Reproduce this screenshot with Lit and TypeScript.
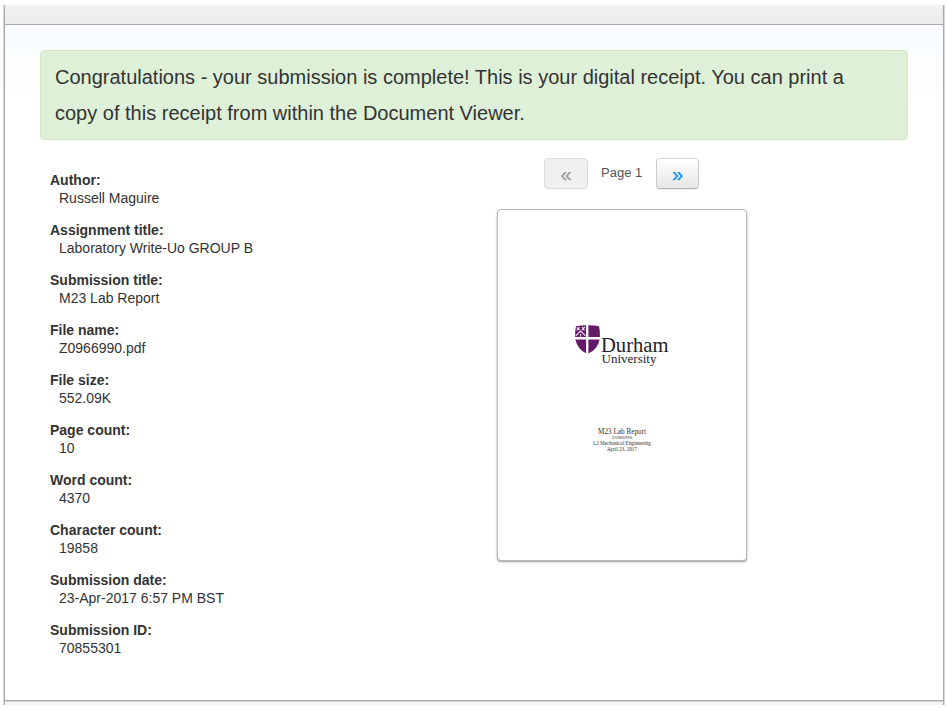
import { LitElement, html, css } from "lit";
import { customElement } from "lit/decorators.js";

const DETAILS: [string, string][] = [
  ["Author:", "Russell Maguire"],
  ["Assignment title:", "Laboratory Write-Uo GROUP B"],
  ["Submission title:", "M23 Lab Report"],
  ["File name:", "Z0966990.pdf"],
  ["File size:", "552.09K"],
  ["Page count:", "10"],
  ["Word count:", "4370"],
  ["Character count:", "19858"],
  ["Submission date:", "23-Apr-2017 6:57 PM BST"],
  ["Submission ID:", "70855301"],
];

@customElement("durham-logo")
class DurhamLogo extends LitElement {
  static styles = css`
    :host { display: block; width: 96px; height: 46px; }
    svg { display: block; }
    text { font-family: "Liberation Serif", serif; fill: #262226; }
    .shield { fill: #641c68; }
    .charge { fill: none; stroke: #eee4ef; stroke-width: 1.1; }
  `;
  render() {
    return html`<svg width="96" height="46" viewBox="0 0 96 46">
      <path class="shield" d="M2 2.300Q7 1.300 12.100 1.300V13H1.100Q.8 7 2 2.300ZM14.400 1.300Q20 1.300 25 2.300Q26.300 7 25.900 13H14.400ZM1.300 15.400H12.100V29.300Q3.800 25.500 1.300 15.400ZM14.400 15.400H25.700Q23.500 25.500 14.400 29.500Z"/>
      <path class="charge" d="M1.800 11.800L6.600 7L11.600 11.800M6.600 10V12.800M2.800 3.500L5.500 6M5.500 3.200L3 6.500M10.800 3L8 6M8 3.200L10.500 6.500"/>
      <text x="27" y="27.500" font-size="20" textLength="67.500" lengthAdjust="spacingAndGlyphs">Durham</text>
      <text x="27.500" y="39.200" font-size="12.500" textLength="55" lengthAdjust="spacingAndGlyphs">University</text>
    </svg>`;
  }
}

@customElement("app-root")
class AppRoot extends LitElement {
  static styles = css`
    :host { display: block; box-sizing: border-box; height: 710px; padding: 5px 2px 5px 3px; background: #fff;
      font: 14px/18px "Liberation Sans", Arial, sans-serif; color: #333; }
    * { box-sizing: border-box; }
    .frame { height: 700px; display: flex; flex-direction: column; border-left: 1px solid #d4d7da; border-right: 1px solid #d4d7da; }
    .inner { flex: 1; display: flex; flex-direction: column; border-left: 1px solid #a9a9a9; border-right: 1px solid #a9a9a9; }
    .head { height: 20px; background: linear-gradient(#f2f2f2, #ececec); border-bottom: 1px solid #a9a9a9; }
    .body { height: 675px; padding: 25px 35px 0; background: linear-gradient(#f8fcff 0, #f8fdff 24px, #fcfdff 26px, #fdfdff 60px, #fff 80px); }
    .foot { height: 5px; border-top: 1px solid #a9a9a9; background: linear-gradient(#d5d5d5 1px, #f4f4f4 1px); }
    .notice { height: 90px; padding: 8px 36px 8px 14px; border: 1px solid #d3e9c6; border-radius: 4px; background: #dff0d8;
      font-size: 20px; line-height: 36px; }
    .columns { display: grid; grid-template-columns: 447px 1fr; }
    dl { margin: 31px 0 0 10px; display: grid; grid-auto-rows: 36px; row-gap: 14px; }
    dt { font-weight: bold; }
    dd { margin: 0 0 0 9px; }
    .preview { width: 270px; padding-top: 18px; display: flex; flex-direction: column; align-items: center; }
    .pager { width: 156px; margin-right: 1px; display: flex; align-items: center; gap: 13px; font-size: 13px; color: #555; }
    button { flex: none; width: 44px; height: 31px; padding: 1px 0 0 1px; border: 1px solid #ddd; border-radius: 4px; background: #f0f0f0;
      font: 20px/24px "Liberation Sans", Arial, sans-serif; color: #999; -webkit-text-stroke: .3px currentColor; }
    .next { width: 43px; border-color: #d6d6d6 #ccc #b5b5b5; background: linear-gradient(#fff, #e6e6e6); color: #0b8ffa; box-shadow: 0 1px 1px #eee; }
    .label { width: 42px; padding: 0 0 2px .5px; white-space: nowrap; }
    .paper { width: 250px; height: 352px; margin-top: 20px; border: 1px solid #b9b9b9; border-radius: 4px; background: #fff;
      box-shadow: 0 1px 2px #999; display: flex; flex-direction: column; align-items: center; }
    .logo { margin: 114px 0 0; }
    .title { margin-top: 55px; }
    .title text { font-family: "Liberation Serif", serif; fill: #333; text-anchor: middle; }
  `;
  render() {
    return html`<div class="frame"><div class="inner">
      <div class="head"></div>
      <div class="body">
        <div class="notice">Congratulations - your submission is complete! This is your digital receipt. You can print a copy of this receipt from within the Document Viewer.</div>
        <div class="columns">
          <dl>${DETAILS.map(([k, v]) => html`<div><dt>${k}</dt><dd>${v}</dd></div>`)}</dl>
          <div class="preview">
            <div class="pager"><button disabled>«</button><span class="label">Page 1</span><button class="next">»</button></div>
            <div class="paper">
              <durham-logo class="logo"></durham-logo>
              <svg class="title" width="70" height="30" viewBox="0 0 70 30">
                <text x="35" y="8.500" font-size="7.200" textLength="48">M23 Lab Report</text>
                <text x="35" y="14" font-size="4.700" textLength="20">Z0966990</text>
                <text x="35" y="20" font-size="5.300" textLength="58">L2 Mechanical Engineering</text>
                <text x="35" y="26" font-size="5.300" textLength="30">April 23, 2017</text>
              </svg>
            </div>
          </div>
        </div>
      </div>
      <div class="foot"></div>
    </div></div>`;
  }
}
